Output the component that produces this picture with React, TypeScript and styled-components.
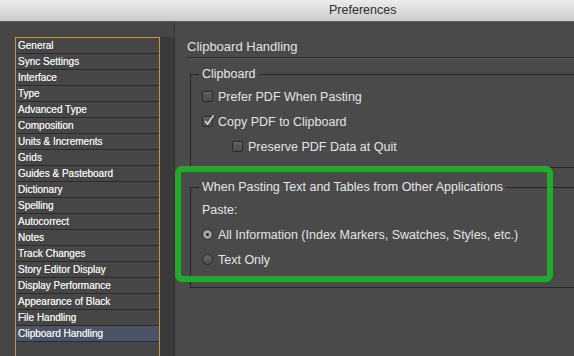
import styled, { createGlobalStyle } from "styled-components";

const GlobalStyle = createGlobalStyle`
  html, body {
    margin: 0;
    padding: 0;
  }
  body {
    background: #464646;
    font-family: "Liberation Sans", Arial, sans-serif;
    overflow: hidden;
  }
`;

const Window = styled.div`
  position: relative;
  width: 574px;
  height: 356px;
  display: flex;
  flex-direction: column;
  overflow: hidden;
  background: #464646;
`;

const TitleBar = styled.div`
  height: 21px;
  flex-shrink: 0;
  padding-left: 329px;
  line-height: 21px;
  font-size: 12.5px;
  color: #2e2e2e;
  background: linear-gradient(#ececec, #cbcbcb);
  border-bottom: 1px solid #5c5c5c;
`;

const Content = styled.div`
  flex: 1;
  display: flex;
  min-height: 0;
`;

const Side = styled.div`
  display: flex;
  padding: 15px 0 0 15px;
`;

const List = styled.ul`
  margin: 0;
  padding: 0;
  list-style: none;
  width: 143px;
  border: 1px solid #d09434;
  border-bottom: none;
  background: #464646;
`;

const Item = styled.li<{ $active?: boolean }>`
  height: 15px;
  line-height: 15px;
  padding-left: 2px;
  border-bottom: 1px solid #2b2b2b;
  font-size: 10px;
  color: #ececec;
  white-space: nowrap;
  text-shadow: 0 0 0.4px #ececec;
  background: ${(p) => (p.$active ? "#4a5466" : "transparent")};
`;

const Track = styled.div`
  width: 14px;
  background: #3a3a3a;
`;

const Main = styled.div`
  flex: 1;
  background: #4a4a4a;
  border-left: 1px solid #333333;
  padding: 15px 0 0 12px;
`;

const Heading = styled.div`
  height: 20px;
  line-height: 20px;
  font-size: 13px;
  color: #e2e2e2;
  border-bottom: 1px solid #2c2c2c;
  box-shadow: 0 1px 0 #575757;
`;

const Group = styled.fieldset<{ $top: number; $bottom: number }>`
  margin: ${(p) => p.$top}px -10px 0 3px;
  padding: 3px 0 ${(p) => p.$bottom}px 11px;
  border: 1px solid #262626;
  min-width: 0;
`;

const Legend = styled.legend`
  padding: 0 3px;
  margin-left: -3px;
  font-size: 12.5px;
  line-height: 14px;
  color: #e6e6e6;
`;

const Row = styled.div<{ $indent?: number }>`
  height: 25px;
  display: flex;
  align-items: center;
  gap: 5px;
  margin-left: ${(p) => p.$indent ?? 0}px;
  font-size: 12.5px;
  color: #e4e4e4;
  white-space: nowrap;
`;

const Box = styled.span`
  position: relative;
  width: 9px;
  height: 9px;
  flex-shrink: 0;
  border: 1px solid #2a2a2a;
  border-radius: 2px;
  background: linear-gradient(#5e5e5e, #4c4c4c);
  box-shadow: inset 0 1px 0 #6c6c6c;
`;

const Check = styled.svg`
  position: absolute;
  left: 0;
  top: -3px;
`;

const Radio = styled.span<{ $on?: boolean }>`
  width: 9px;
  height: 9px;
  flex-shrink: 0;
  border: 1px solid #2a2a2a;
  border-radius: 50%;
  display: flex;
  align-items: center;
  justify-content: center;
  background: ${(p) =>
    p.$on
      ? "radial-gradient(circle, #b4b4b4, #8a8a8a)"
      : "linear-gradient(#666666, #505050)"};
  &::after {
    content: "";
    width: 3px;
    height: 3px;
    border-radius: 50%;
    background: #222222;
    display: ${(p) => (p.$on ? "block" : "none")};
  }
`;

const Highlight = styled.div`
  position: absolute;
  left: 175px;
  top: 166px;
  width: 378px;
  height: 116px;
  box-sizing: border-box;
  border: 6px solid #22ab2a;
  border-radius: 7px;
  pointer-events: none;
`;

const panels = [
  "General",
  "Sync Settings",
  "Interface",
  "Type",
  "Advanced Type",
  "Composition",
  "Units & Increments",
  "Grids",
  "Guides & Pasteboard",
  "Dictionary",
  "Spelling",
  "Autocorrect",
  "Notes",
  "Track Changes",
  "Story Editor Display",
  "Display Performance",
  "Appearance of Black",
  "File Handling",
  "Clipboard Handling",
];

function Checkbox({ checked }: { checked?: boolean }) {
  return (
    <Box>
      {checked && (
        <Check width="12" height="12" viewBox="0 0 12 12">
          <path d="M2 7 L4.5 10 L10.5 1.5" fill="none" stroke="#dedede" strokeWidth="1.4" />
        </Check>
      )}
    </Box>
  );
}

export default function App() {
  return (
    <>
      <GlobalStyle />
      <Window>
        <TitleBar>Preferences</TitleBar>
        <Content>
          <Side>
            <List>
              {panels.map((name) => (
                <Item key={name} $active={name === "Clipboard Handling"}>
                  {name}
                </Item>
              ))}
            </List>
            <Track />
          </Side>
          <Main>
            <Heading>Clipboard Handling</Heading>
            <Group $top={9} $bottom={8}>
              <Legend>Clipboard</Legend>
              <Row>
                <Checkbox />
                Prefer PDF When Pasting
              </Row>
              <Row>
                <Checkbox checked />
                Copy PDF to Clipboard
              </Row>
              <Row $indent={30}>
                <Checkbox />
                Preserve PDF Data at Quit
              </Row>
            </Group>
            <Group $top={12} $bottom={15}>
              <Legend>When Pasting Text and Tables from Other Applications</Legend>
              <Row>Paste:</Row>
              <Row>
                <Radio $on />
                All Information (Index Markers, Swatches, Styles, etc.)
              </Row>
              <Row>
                <Radio />
                Text Only
              </Row>
            </Group>
          </Main>
        </Content>
        <Highlight />
      </Window>
    </>
  );
}
